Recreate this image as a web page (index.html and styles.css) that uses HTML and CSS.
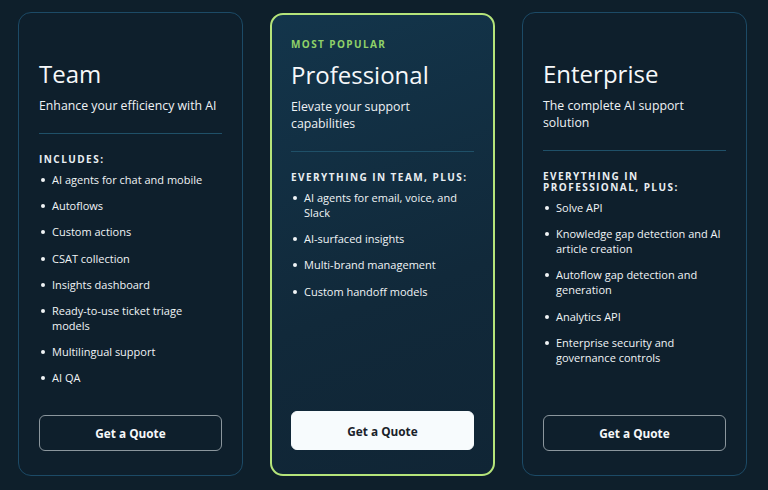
FILE: index.html
```html
<!DOCTYPE html>
<html lang="en">
<head>
<meta charset="utf-8">
<title>Pricing</title>
<link rel="stylesheet" href="styles.css">
</head>
<body>
<main class="plans">
  <section class="card">
    <div class="tag tag-hidden">&nbsp;</div>
    <h2 class="title">Team</h2>
    <p class="sub">Enhance your efficiency with AI</p>
    <hr class="rule">
    <h3 class="head">INCLUDES:</h3>
    <ul class="feats">
      <li>AI agents for chat and mobile</li>
      <li>Autoflows</li>
      <li>Custom actions</li>
      <li>CSAT collection</li>
      <li>Insights dashboard</li>
      <li>Ready-to-use ticket triage models</li>
      <li>Multilingual support</li>
      <li>AI QA</li>
    </ul>
    <a class="btn" href="#">Get a Quote</a>
  </section>
  <section class="card card-pop">
    <div class="tag">MOST POPULAR</div>
    <h2 class="title">Professional</h2>
    <p class="sub">Elevate your support capabilities</p>
    <hr class="rule">
    <h3 class="head">EVERYTHING IN TEAM, PLUS:</h3>
    <ul class="feats">
      <li>AI agents for email, voice, and Slack</li>
      <li>AI-surfaced insights</li>
      <li>Multi-brand management</li>
      <li>Custom handoff models</li>
    </ul>
    <a class="btn btn-solid" href="#">Get a Quote</a>
  </section>
  <section class="card">
    <div class="tag tag-hidden">&nbsp;</div>
    <h2 class="title">Enterprise</h2>
    <p class="sub">The complete AI support solution</p>
    <hr class="rule">
    <h3 class="head">EVERYTHING IN PROFESSIONAL, PLUS:</h3>
    <ul class="feats">
      <li>Solve API</li>
      <li>Knowledge gap detection and AI article creation</li>
      <li>Autoflow gap detection and generation</li>
      <li>Analytics API</li>
      <li>Enterprise security and governance controls</li>
    </ul>
    <a class="btn" href="#">Get a Quote</a>
  </section>
</main>
</body>
</html>
```
FILE: styles.css
```css
* { box-sizing: border-box; }
html, body { margin: 0; padding: 0; }
body {
  background: #0e1f2b;
  font-family: "Open Sans", "Liberation Sans", sans-serif;
  color: #f3f6f8;
  width: 768px;
  height: 490px;
  overflow: hidden;
}
.plans {
  display: flex;
  gap: 27px;
  padding: 12px 0 0 18px;
}
.card {
  width: 225px;
  height: 464px;
  border: 1px solid #1c4a66;
  border-radius: 13px;
  background: #0e1f2c;
  padding: 24px 20px 24px 20px;
  display: flex;
  flex-direction: column;
}
.card-pop {
  margin-top: 1px;
  height: 463px;
  border: 2px solid #b5e47a;
  background: linear-gradient(160deg, #13354b 0%, #11293a 60%, #102535 100%);
  padding: 23px 19px 24px 19px;
}
.tag {
  font-size: 10px;
  line-height: 12px;
  font-weight: 700;
  letter-spacing: 1.4px;
  color: #8fd168;
  height: 12px;
}
.tag-hidden { visibility: hidden; }
.title {
  margin: 9px 0 0;
  font-size: 24px;
  line-height: 32px;
  font-weight: 400;
  color: #f6f8fa;
}
.sub {
  margin: 7px 0 0;
  font-size: 12.3px;
  line-height: 17px;
  font-weight: 500;
  color: #eef2f5;
}
.rule {
  margin: 19px 0 0;
  border: 0;
  height: 1px;
  background: #1f5068;
}
.head {
  margin: 20px 0 0;
  font-size: 10px;
  line-height: 11px;
  font-weight: 700;
  letter-spacing: 1.45px;
  color: #e9eef2;
}
.feats {
  list-style: none;
  margin: 7px 0 0;
  padding: 0;
  display: flex;
  flex-direction: column;
  gap: 11.2px;
}
.feats li {
  position: relative;
  padding-left: 13px;
  font-size: 11px;
  line-height: 15px;
  font-weight: 500;
  color: #f0f4f6;
}
.feats li::before {
  content: "";
  position: absolute;
  left: 2px;
  top: 6px;
  width: 4px;
  height: 4px;
  border-radius: 50%;
  background: #f0f4f6;
}
.btn {
  margin-top: auto;
  display: flex;
  align-items: center;
  justify-content: center;
  height: 36px;
  border: 1px solid #8b969d;
  border-radius: 6px;
  color: #f6f8fa;
  font-size: 11.8px;
  font-weight: 700;
  text-decoration: none;
}
.btn-solid {
  height: 39px;
  background: #f7fbfd;
  border-color: #f7fbfd;
  color: #1a222a;
}
```
